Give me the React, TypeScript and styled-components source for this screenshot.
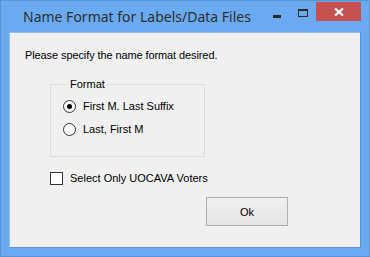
import styled, { createGlobalStyle } from 'styled-components';

const GlobalStyle = createGlobalStyle`
    html, body {
        margin: 0;
        padding: 0;
        background: #ffffff;
    }
`;

// Outer window frame
const Window = styled.div`
    width: 370px;
    height: 257px;
    box-sizing: border-box;
    background: #6aaaf0;
    border: 1px solid #5a92d6;
    display: flex;
    flex-direction: column;
    padding: 0 8px 8px 8px;
`;

const TitleBar = styled.div`
    height: 31px;
    display: flex;
    align-items: flex-start;
`;

const Title = styled.div`
    flex: 1;
    font-family: 'Noto Sans', 'Open Sans', sans-serif;
    font-size: 14px;
    white-space: nowrap;
    color: #2e2e2e;
    padding: 6px 0 0 14px;
    line-height: 20px;
`;

const CaptionButton = styled.div<{ $w: number }>`
    width: ${(p) => p.$w}px;
    height: 19px;
    display: flex;
    align-items: center;
    justify-content: center;
`;

const CloseButton = styled(CaptionButton)`
    background: #c75050;
`;

// Client area of the dialog
const Content = styled.div`
    flex: 1;
    background: #f0f0f0;
    border: 1px solid #5b94d6;
    border-top-color: #8fbff3;
    border-left-color: #8fbff3;
    font-family: 'Liberation Sans', Arial, sans-serif;
    font-size: 11px;
    color: #000;
    padding: 16px 0 0 15px;
    display: flex;
    flex-direction: column;
`;

const Prompt = styled.div`
    line-height: 13px;
    letter-spacing: -0.1px;
`;

const GroupBox = styled.fieldset`
    margin: 16px 0 0 25px;
    padding: 9px 0 20px 12px;
    width: 155px;
    box-sizing: border-box;
    border: 1px solid #dcdcdc;
    display: flex;
    flex-direction: column;
    gap: 10px;
`;

const Legend = styled.legend`
    padding: 0 2px;
    margin-left: 5px;
    line-height: 13px;
`;

const OptionRow = styled.label`
    display: flex;
    align-items: center;
    gap: 7px;
    line-height: 13px;
`;

const Radio = styled.span<{ $checked?: boolean }>`
    width: 11px;
    height: 11px;
    border: 1px solid #333;
    border-radius: 50%;
    background: #fff;
    display: flex;
    align-items: center;
    justify-content: center;
    &::after {
        content: '';
        width: 5px;
        height: 5px;
        border-radius: 50%;
        background: ${(p) => (p.$checked ? '#000' : 'transparent')};
    }
`;

const CheckRow = styled(OptionRow)`
    margin: 15px 0 0 25px;
`;

const CheckBox = styled.span`
    width: 11px;
    height: 11px;
    border: 1px solid #333;
    background: #fff;
`;

const ButtonRow = styled.div`
    display: flex;
    justify-content: flex-end;
    padding-right: 72px;
    margin-top: 12px;
`;

const Button = styled.button`
    width: 82px;
    height: 29px;
    border: 1px solid #adadad;
    background: linear-gradient(#f0f0f0, #e5e5e5);
    font-family: 'Liberation Sans', Arial, sans-serif;
    font-size: 11px;
    color: #000;
    padding: 0;
`;

const App = () => {
    return (
        <>
            <GlobalStyle />
            <Window>
                <TitleBar>
                    <Title>Name Format for Labels/Data Files</Title>
                    {/* Minimize */}
                    <CaptionButton $w={26} style={{ marginTop: 1 }}>
                        <svg width="8" height="3" viewBox="0 0 8 3" style={{ marginTop: 9 }}>
                            <rect width="8" height="3" fill="#2a2a2a" />
                        </svg>
                    </CaptionButton>
                    {/* Maximize */}
                    <CaptionButton $w={26}>
                        <svg width="10" height="8" viewBox="0 0 10 8" style={{ marginTop: 4 }}>
                            <rect x="0.5" y="0.5" width="9" height="7" fill="none" stroke="#2a2a2a" />
                            <rect x="0" y="0" width="10" height="2" fill="#2a2a2a" />
                        </svg>
                    </CaptionButton>
                    <CloseButton $w={45} style={{ marginTop: 1 }}>
                        <svg width="10" height="8" viewBox="0 0 10 8">
                            <path d="M1 0.5 L9 7.5 M9 0.5 L1 7.5" stroke="#fff" strokeWidth="2.2" />
                        </svg>
                    </CloseButton>
                </TitleBar>
                <Content>
                    <Prompt>Please specify the name format desired.</Prompt>
                    <GroupBox>
                        <Legend>Format</Legend>
                        <OptionRow>
                            <Radio $checked />
                            First M. Last Suffix
                        </OptionRow>
                        <OptionRow>
                            <Radio />
                            Last, First M
                        </OptionRow>
                    </GroupBox>
                    <CheckRow>
                        <CheckBox />
                        Select Only UOCAVA Voters
                    </CheckRow>
                    <ButtonRow>
                        <Button>Ok</Button>
                    </ButtonRow>
                </Content>
            </Window>
        </>
    );
};

export default App;
